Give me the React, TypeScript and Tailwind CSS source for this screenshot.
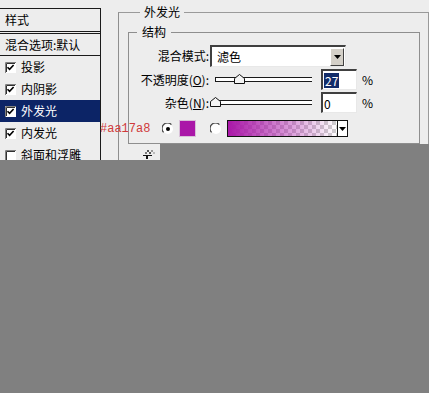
import React from 'react';

const ROWS = [
  { label: '投影', checked: true },
  { label: '内阴影', checked: true },
  { label: '外发光', checked: true, active: true },
  { label: '内发光', checked: true },
  { label: '斜面和浮雕', checked: false },
];

function CheckBox({ checked }: { checked: boolean }) {
  return (
    <svg width="11" height="11" viewBox="0 0 11 11" className="shrink-0">
      <rect x="0" y="0" width="11" height="11" fill="#fff" />
      <path d="M0.5 11V0.5H11" fill="none" stroke="#808080" />
      <path d="M1.5 10V1.5H10" fill="none" stroke="#303030" />
      {checked && (
        <path d="M2.5 5.2L4.6 7.4L8.6 3" fill="none" stroke="#000" strokeWidth="1.6" />
      )}
    </svg>
  );
}

function Radio({ checked }: { checked: boolean }) {
  return (
    <svg width="12" height="12" viewBox="0 0 12 12" className="shrink-0">
      <circle cx="6" cy="6" r="5" fill="#fff" />
      <path d="M1.6 9.4A5 5 0 0 1 9.4 1.6" fill="none" stroke="#404040" strokeWidth="1.2" />
      {checked && <circle cx="6" cy="6" r="2" fill="#000" />}
    </svg>
  );
}

function Slider({ value }: { value: number }) {
  return (
    <div className="relative h-[11px] w-[97px]">
      <div className="absolute left-0 right-0 top-[3px] h-[5px] border-y border-l border-[#1a1a1a] bg-white" />
      <svg
        width="11"
        height="10"
        viewBox="0 0 11 10"
        className="absolute top-0"
        style={{ left: `${value * 0.9 - 5}px` }}
      >
        <polygon points="0.5,9.5 0.5,4.5 5.5,0.5 10.5,4.5 10.5,9.5" fill="#f4f4f4" stroke="#111" />
      </svg>
    </div>
  );
}

function NumInput({ value, selected }: { value: string; selected?: boolean }) {
  return (
    <div className="flex h-[21px] w-[36px] items-center border-l-2 border-t-2 border-b border-r border-l-[#404040] border-t-[#404040] border-b-[#e8e8e8] border-r-[#e8e8e8] bg-white pl-[1px]">
      <span
        className={
          selected
            ? 'bg-[#132c69] px-[1px] text-[12px] leading-[15px] text-white'
            : 'text-[12px] leading-[15px] text-black'
        }
      >
        {value}
      </span>
    </div>
  );
}

function DownArrow() {
  return (
    <svg width="7" height="4" viewBox="0 0 7 4">
      <polygon points="0,0 7,0 3.5,4" fill="#000" />
    </svg>
  );
}

function GradientBox() {
  return (
    <div className="flex h-[17px] w-[121px] border border-[#111] bg-white">
      <svg width="109" height="15" className="shrink-0">
        <defs>
          <pattern id="chk" width="8" height="8" patternUnits="userSpaceOnUse">
            <rect width="8" height="8" fill="#fff" />
            <rect width="4" height="4" fill="#cfcfcf" />
            <rect x="4" y="4" width="4" height="4" fill="#cfcfcf" />
          </pattern>
          <linearGradient id="fade" x1="0" x2="1" y1="0" y2="0">
            <stop offset="0" stopColor="#aa17a8" stopOpacity="1" />
            <stop offset="1" stopColor="#aa17a8" stopOpacity="0" />
          </linearGradient>
        </defs>
        <rect width="109" height="15" fill="url(#chk)" />
        <rect width="109" height="15" fill="url(#fade)" />
      </svg>
      <div className="flex w-[10px] items-center justify-center border-l border-[#111]">
        <DownArrow />
      </div>
    </div>
  );
}

export default function App() {
  return (
    <div className="relative flex h-[393px] w-[429px] flex-col overflow-hidden bg-[#ededed] font-['Noto_Sans_CJK_SC','Liberation_Sans',sans-serif] text-[12px] text-black">
      <div className="flex h-[160px] shrink-0">
        {/* 왼쪽 스타일 목록 */}
        <div className="w-[101px] shrink-0 pt-[8px]">
          <div className="h-full border-r border-[#1a1a1a]">
            <div className="flex h-[24px] items-center border-y border-[#1a1a1a] pl-[5px]">样式</div>
            <div className="mt-[1px] flex h-[23px] items-center border-y border-[#1a1a1a] pl-[5px]">
              混合选项:默认
            </div>
            {ROWS.map(row => (
              <div
                key={row.label}
                className={`flex h-[22px] items-center gap-[5px] pl-[5px] ${
                  row.active ? 'bg-[#0c2466] text-white' : ''
                }`}
              >
                <CheckBox checked={row.checked} />
                <span>{row.label}</span>
              </div>
            ))}
          </div>
        </div>

        {/* 외발광 패널 */}
        <fieldset className="ml-[17px] mt-[4px] min-w-0 flex-1 border border-b-0 border-r-[#9a9a9a] border-l-[#8e8e8e] border-t-[#9a9a9a] pr-[8px] pl-[9px]">
          <legend className="ml-[12px] px-[4px] leading-[16px]">外发光</legend>
          <fieldset className="mt-[4px] border border-[#8e8e8e] pb-[6px]">
            <legend className="ml-[8px] px-[5px] leading-[16px]">结构</legend>
            <div className="flex flex-col pt-[5px]">
              <div className="flex h-[22px] items-center">
                <span className="w-[80px] text-right">混合模式:</span>
                <div className="ml-[1px] flex h-[22px] w-[136px] items-center border-l-2 border-t-2 border-b border-r border-l-[#404040] border-t-[#404040] border-b-[#e8e8e8] border-r-[#e8e8e8] bg-white">
                  <span className="flex-1 pl-[5px]">滤色</span>
                  <div className="mr-[1px] flex h-[18px] w-[14px] items-center justify-center border border-b-[#404040] border-l-[#fff] border-r-[#404040] border-t-[#fff] bg-[#d4d0c8]">
                    <DownArrow />
                  </div>
                </div>
              </div>

              <div className="mt-[2px] flex h-[21px] items-center">
                <span className="w-[80px] text-right">
                  不透明度(<span className="underline">O</span>):
                </span>
                <div className="ml-[6px]">
                  <Slider value={27} />
                </div>
                <div className="ml-[9px]">
                  <NumInput value="27" selected />
                </div>
                <span className="ml-[5px]">%</span>
              </div>

              <div className="mt-[2px] flex h-[21px] items-center">
                <span className="w-[80px] text-right">
                  杂色(<span className="underline">N</span>):
                </span>
                <div className="ml-[6px]">
                  <Slider value={0} />
                </div>
                <div className="ml-[9px]">
                  <NumInput value="0" />
                </div>
                <span className="ml-[5px]">%</span>
              </div>

              <div className="mt-[7px] flex h-[17px] items-center pl-[33px]">
                <Radio checked />
                <div className="ml-[5px] h-[17px] w-[17px] border border-[#d8c0d8] bg-[#aa17a8]" />
                <div className="ml-[14px]">
                  <Radio checked={false} />
                </div>
                <div className="ml-[5px]">
                  <GradientBox />
                </div>
              </div>
            </div>
          </fieldset>
          <svg width="16" height="10" viewBox="0 0 16 10" className="ml-[13px] mt-[5px] block">
            <rect x="6" y="1" width="2" height="2" fill="#555" />
            <rect x="8" y="3" width="2" height="2" fill="#555" />
            <rect x="10" y="1" width="2" height="2" fill="#999" />
            <rect x="12" y="3" width="2" height="2" fill="#bbb" />
            <rect x="4" y="3" width="2" height="2" fill="#777" />
            <rect x="2" y="6" width="9" height="1" fill="#111" />
            <rect x="5" y="7" width="2" height="3" fill="#111" />
          </svg>
        </fieldset>
      </div>

      {/* 회색 덮개 */}
      <div className="flex-1 bg-[#808080]" />
      <div className="absolute left-[160px] top-[144px] h-[16px] w-[269px] bg-[#808080]" />

      {/* 빨간 색상 주석 */}
      <span className="absolute left-[100px] top-[121px] font-['Liberation_Mono',monospace] text-[12px] leading-[16px] text-[#d03a3a]">
        #aa17a8
      </span>
    </div>
  );
}
